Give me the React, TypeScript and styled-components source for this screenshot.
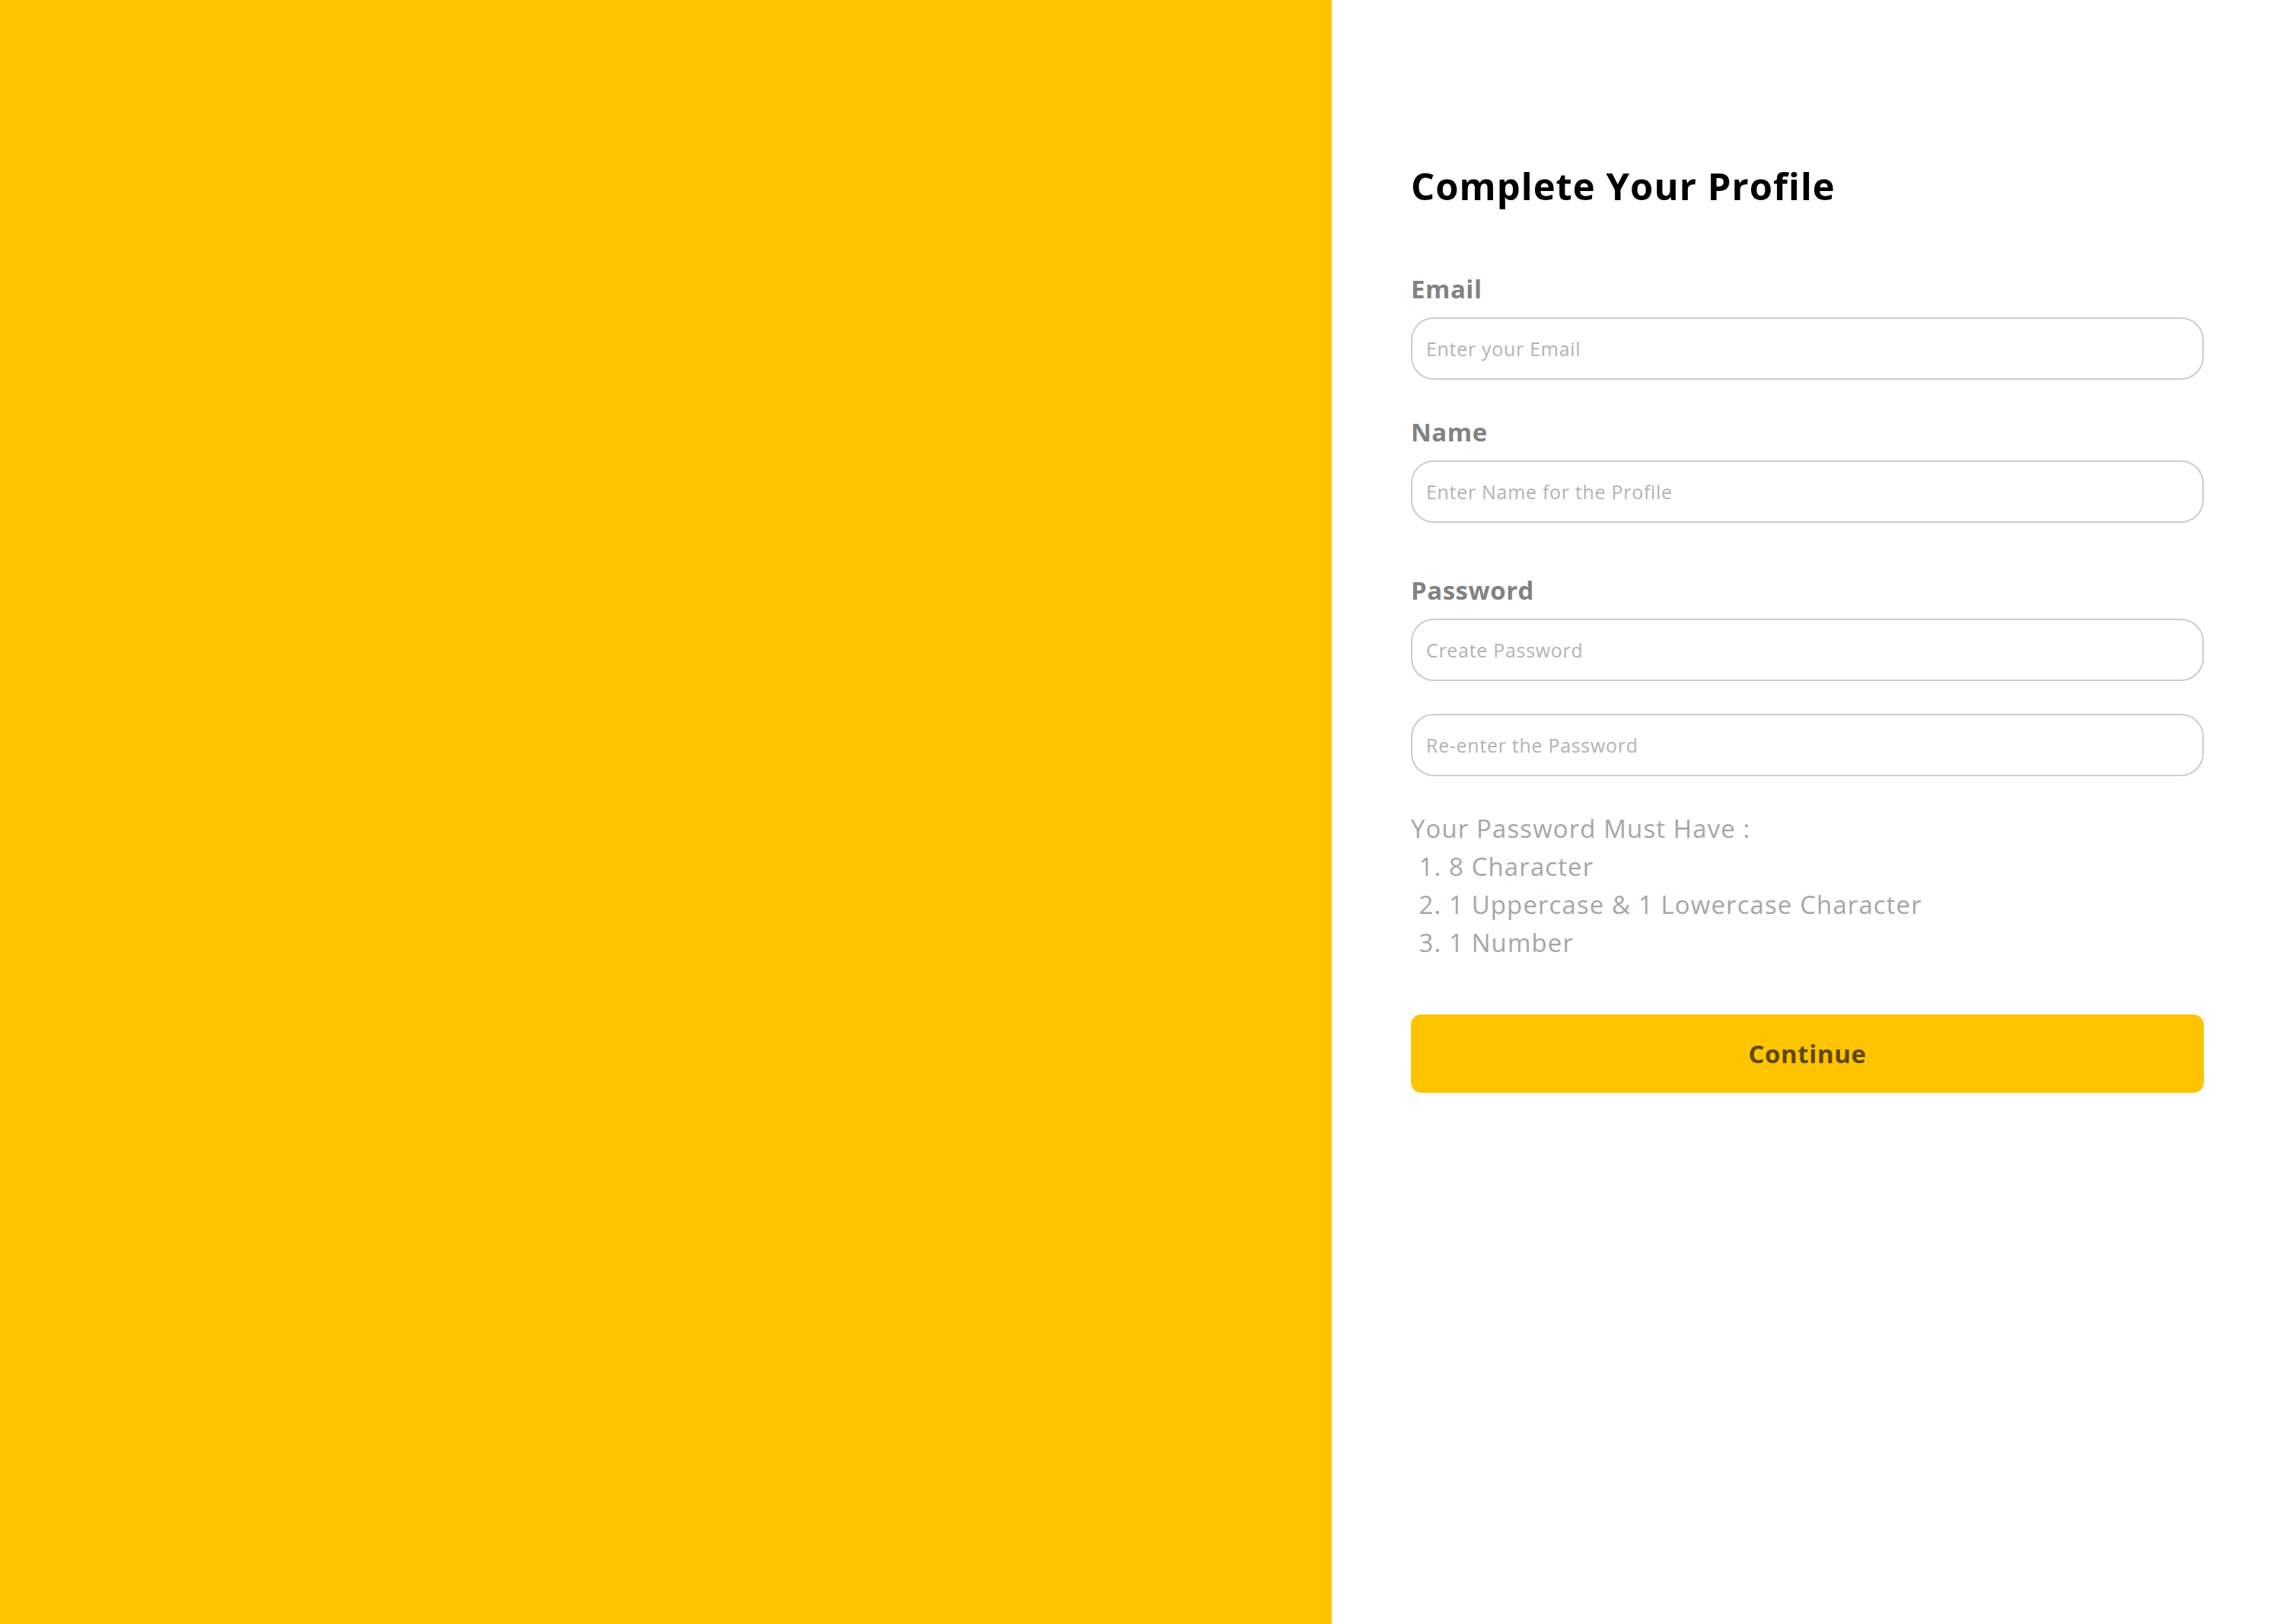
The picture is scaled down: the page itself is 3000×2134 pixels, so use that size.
import React from "react";
import styled, { createGlobalStyle } from "styled-components";

const GlobalStyle = createGlobalStyle`
  html, body {
    margin: 0;
    padding: 0;
    background: #ffffff;
  }
  body {
    font-family: "Open Sans", "Noto Sans", sans-serif;
  }
  * {
    box-sizing: border-box;
  }
`;

const FONT = `"Open Sans", "Noto Sans", sans-serif`;

const Page = styled.div`
  display: flex;
  width: 100%;
  min-height: 2134px;
  background: #ffffff;
`;

const BrandPanel = styled.div`
  flex: 0 0 1750px;
  background: #ffc400;
`;

const FormPanel = styled.div`
  flex: 1;
  display: flex;
  flex-direction: column;
  padding: 214px 104px 0 104px;
`;

const Title = styled.h1`
  margin: 0;
  font-family: ${FONT};
  font-size: 49px;
  line-height: 60px;
  font-weight: 700;
  letter-spacing: 1px;
  color: #000000;
`;

const Form = styled.form`
  display: flex;
  flex-direction: column;
  margin-top: 86px;
`;

const Label = styled.label<{ $gapTop?: number }>`
  display: block;
  margin: ${(p) => p.$gapTop ?? 0}px 0 17px 0;
  font-family: ${FONT};
  font-size: 33px;
  line-height: 40px;
  font-weight: 700;
  letter-spacing: 0.5px;
  color: #828282;
`;

const Field = styled.input<{ $gapTop?: number }>`
  display: block;
  width: 100%;
  height: 82px;
  margin: ${(p) => p.$gapTop ?? 0}px 0 0 0;
  padding: 0 18px;
  border: 2px solid #cccccc;
  border-radius: 30px;
  background: #ffffff;
  font-family: ${FONT};
  font-size: 25px;
  letter-spacing: 0.7px;
  color: #333333;
  outline: none;

  &::placeholder {
    color: #b3b3b3;
    opacity: 1;
  }
`;

const Rules = styled.div`
  margin-top: 44px;
  font-family: ${FONT};
  font-size: 33px;
  line-height: 50px;
  font-weight: 400;
  letter-spacing: 1.1px;
  color: #a6a6a6;
`;

const RulesHeading = styled.div``;

const RuleList = styled.ol`
  margin: 0;
  padding-left: 50px;
`;

const RuleItem = styled.li``;

const ContinueButton = styled.button`
  display: flex;
  align-items: center;
  justify-content: center;
  width: 100%;
  height: 103px;
  margin-top: 69px;
  border: none;
  border-radius: 14px;
  background: #ffc400;
  font-family: ${FONT};
  font-size: 33px;
  font-weight: 700;
  letter-spacing: 0.6px;
  color: #5e4800;
  cursor: pointer;
`;

export default function App() {
  return (
    <>
      <GlobalStyle />
      <Page>
        <BrandPanel />
        <FormPanel>
          <Title>Complete Your Profile</Title>
          <Form onSubmit={(e) => e.preventDefault()}>
            <Label htmlFor="email">Email</Label>
            <Field id="email" type="email" placeholder="Enter your Email" />

            <Label htmlFor="name" $gapTop={49}>
              Name
            </Label>
            <Field id="name" type="text" placeholder="Enter Name for the Profile" />

            <Label htmlFor="password" $gapTop={69}>
              Password
            </Label>
            <Field id="password" type="password" placeholder="Create Password" />
            <Field type="password" placeholder="Re-enter the Password" $gapTop={43} />

            <Rules>
              <RulesHeading>Your Password Must Have :</RulesHeading>
              <RuleList>
                <RuleItem>8 Character</RuleItem>
                <RuleItem>1 Uppercase &amp; 1 Lowercase Character</RuleItem>
                <RuleItem>1 Number</RuleItem>
              </RuleList>
            </Rules>

            <ContinueButton type="submit">Continue</ContinueButton>
          </Form>
        </FormPanel>
      </Page>
    </>
  );
}
